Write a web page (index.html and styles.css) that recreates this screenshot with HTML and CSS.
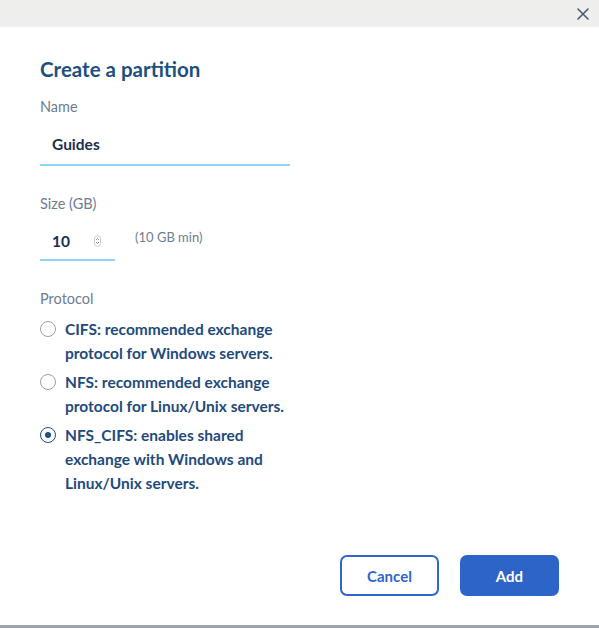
FILE: index.html
```html
<!DOCTYPE html>
<html lang="en">
<head>
<meta charset="utf-8">
<title>Create a partition</title>
<link rel="stylesheet" href="styles.css">
</head>
<body>
<div class="modal">
  <div class="modal-header">
    <button class="close" aria-label="Close">
      <svg width="12" height="12" viewBox="0 0 12 12"><path d="M1 1L11 11M11 1L1 11" stroke="#4a5a70" stroke-width="1.6" stroke-linecap="round"/></svg>
    </button>
  </div>
  <div class="modal-body">
    <h1 class="title">Create a partition</h1>
    <div class="field">
      <label class="label">Name</label>
      <div class="input input-name">Guides</div>
    </div>
    <div class="field field-size">
      <label class="label">Size (GB)</label>
      <div class="size-row">
        <div class="input input-size">
          <span>10</span>
          <span class="spinner">
            <svg width="7" height="12" viewBox="0 0 7 12"><rect x="0.5" y="0.5" width="6" height="11" rx="3" fill="none" stroke="#c8ccd2"/><path d="M2 5L3.5 3.5L5 5M2 7L3.5 8.5L5 7" fill="none" stroke="#6a7380" stroke-width="0.8"/></svg>
          </span>
        </div>
        <span class="hint">(10 GB min)</span>
      </div>
    </div>
    <div class="field field-protocol">
      <label class="label">Protocol</label>
      <div class="radios">
        <div class="radio"><span class="dot"></span><span class="rtext">CIFS: recommended exchange<br>protocol for Windows servers.</span></div>
        <div class="radio"><span class="dot"></span><span class="rtext">NFS: recommended exchange<br>protocol for Linux/Unix servers.</span></div>
        <div class="radio checked"><span class="dot"></span><span class="rtext">NFS_CIFS: enables shared<br>exchange with Windows and<br>Linux/Unix servers.</span></div>
      </div>
    </div>
  </div>
  <div class="modal-footer">
    <button class="btn btn-outline">Cancel</button>
    <button class="btn btn-primary">Add</button>
  </div>
</div>
</body>
</html>
```
FILE: styles.css
```css
* { box-sizing: border-box; }
html, body { margin: 0; padding: 0; background: #fff; }
body { font-family: "Lato", "Open Sans", sans-serif; width: 599px; height: 628px; overflow: hidden; }
.modal { width: 599px; height: 628px; display: flex; flex-direction: column; border-bottom: 3px solid #9ba3ad; }
.modal-header { height: 27px; background: #eeefed; display: flex; justify-content: flex-end; align-items: center; padding-right: 10px; }
.close { background: none; border: 0; padding: 0; width: 12px; height: 12px; display: flex; cursor: pointer; }
.modal-body { padding: 0 40px; flex: 1; }
.title { margin: 30px 0 0; font-size: 20.5px; font-weight: 700; color: #1d4f80; line-height: 24px; }
.field { display: flex; flex-direction: column; }
.label { font-size: 14.5px; color: #6d7d8f; line-height: 18px; margin-top: 17px; }
.input { font-size: 15.5px; font-weight: 700; color: #1b2f4b; border-bottom: 2px solid #8fd5f6; padding: 0 12px; line-height: 20px; }
.input-name { width: 250px; margin-top: 18px; padding-bottom: 10px; }
.field-size .label { margin-top: 29px; }
.size-row { display: flex; align-items: flex-start; margin-top: 17px; }
.input-size { width: 75px; display: flex; align-items: center; justify-content: space-between; padding-right: 14px; padding-bottom: 8px; padding-top: 1px; }
.spinner { display: flex; }
.hint { font-size: 13px; color: #6d7d8f; margin-left: 20px; line-height: 14px; }
.field-protocol .label { margin-top: 29px; }
.radios { display: flex; flex-direction: column; gap: 5px; margin-top: 9px; }
.radio { display: flex; align-items: flex-start; }
.dot { width: 16px; height: 16px; border: 1px solid #9aa0a6; border-radius: 50%; margin-top: 4px; margin-right: 9px; flex: none; display: flex; align-items: center; justify-content: center; }
.radio.checked .dot { border-color: #1d4f80; }
.radio.checked .dot::after { content: ""; width: 6px; height: 6px; border-radius: 50%; background: #1d4f80; }
.rtext { font-size: 15.5px; font-weight: 700; color: #1f4b7c; line-height: 24px; }
.modal-footer { display: flex; justify-content: flex-end; gap: 21px; padding: 0 40px 29px 0; }
.btn { width: 99px; height: 41px; border-radius: 7px; font-family: inherit; font-size: 15px; font-weight: 700; cursor: pointer; }
.btn-outline { background: #fff; border: 2px solid #2f66cb; color: #2f66cb; }
.btn-primary { background: #2d64c8; border: 0; color: #fff; }
```
